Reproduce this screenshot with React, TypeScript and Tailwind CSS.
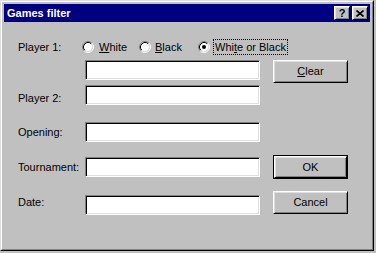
import React from "react";

const raised =
  "border border-t-white border-l-white border-r-black border-b-black shadow-[inset_1px_1px_0_#dfdfdf,inset_-1px_-1px_0_#808080]";
const sunken =
  "border border-t-[#808080] border-l-[#808080] border-r-white border-b-white shadow-[inset_1px_1px_0_#000,inset_-1px_-1px_0_#dfdfdf] bg-white";

const Radio = ({ checked }: { checked?: boolean }) => (
  <svg width="12" height="12" viewBox="0 0 12 12" className="shrink-0">
    <circle cx="6" cy="6" r="4.5" fill="#fff" />
    <path d="M2.11 9.89A5.5 5.5 0 0 1 9.89 2.11" stroke="#808080" fill="none" />
    <path d="M9.89 2.11A5.5 5.5 0 0 1 2.11 9.89" stroke="#fff" fill="none" />
    <path d="M2.82 9.18A4.5 4.5 0 0 1 9.18 2.82" stroke="#000" fill="none" />
    <path d="M9.18 2.82A4.5 4.5 0 0 1 2.82 9.18" stroke="#dfdfdf" fill="none" />
    {checked && <circle cx="6" cy="6" r="2" fill="#000" />}
  </svg>
);

const Field = ({ label, labelClass = "" }: { label?: string; labelClass?: string }) => (
  <div className="flex h-[20px] items-center">
    <div className={"w-[67px] shrink-0 whitespace-nowrap leading-[13px] " + labelClass}>{label}</div>
    <div className={"h-[20px] w-[175px] shrink-0 " + sunken}></div>
  </div>
);

export default function App() {
  return (
    <div className="w-[376px] h-[253px] bg-[#c0c0c0] font-['Liberation_Sans',Arial,sans-serif] text-[11px] text-black">
      <div className="w-[374px] h-[251px] border border-t-[#dfdfdf] border-l-[#dfdfdf] border-r-black border-b-black">
        <div className="h-full flex flex-col p-[2px] border border-t-white border-l-white border-r-[#808080] border-b-[#808080]">
          {/* title bar */}
          <div className="h-[18px] bg-[#000080] flex items-center pl-[3px] pr-[2px]">
            <span className="flex-1 text-white font-bold leading-[13px]">Games filter</span>
            <div className={"w-[16px] h-[14px] bg-[#c0c0c0] flex items-center justify-center font-bold text-[11px] leading-none " + raised}>
              ?
            </div>
            <div className={"ml-[2px] w-[16px] h-[14px] bg-[#c0c0c0] flex items-center justify-center " + raised}>
              <svg width="8" height="7" viewBox="0 0 8 7">
                <path d="M0.5 0.5L7.5 6.5M7.5 0.5L0.5 6.5" stroke="#000" strokeWidth="1.6" fill="none" />
              </svg>
            </div>
          </div>

          {/* body */}
          <div className="flex pl-[14px]">
            <div className="flex flex-col w-[242px] shrink-0">
              <div className="mt-[17px] h-[16px] flex items-center leading-[13px] whitespace-nowrap">
                <div className="w-[64px] shrink-0">Player 1:</div>
                <div className="w-[57px] shrink-0 flex items-center">
                  <Radio />
                  <span className="ml-[5px]">
                    <u>W</u>hite
                  </span>
                </div>
                <div className="w-[59px] shrink-0 flex items-center">
                  <Radio />
                  <span className="ml-[4px]">
                    <u>B</u>lack
                  </span>
                </div>
                <div className="shrink-0 flex items-center">
                  <Radio checked />
                  <span className="ml-[3px] h-[16px] px-[1px] flex items-center border border-dotted border-black">
                    Whi<u>t</u>e or Black
                  </span>
                </div>
              </div>
              <div className="mt-[5px]">
                <Field />
              </div>
              <div className="mt-[5px]">
                <Field label="Player 2:" labelClass="pt-[6px]" />
              </div>
              <div className="mt-[17px]">
                <Field label="Opening:" />
              </div>
              <div className="mt-[15px]">
                <Field label="Tournament:" />
              </div>
              <div className="mt-[18px]">
                <Field label="Date:" labelClass="pb-[6px]" />
              </div>
            </div>

            <div className="ml-[13px] flex flex-col w-[75px] shrink-0">
              <button className={"mt-[38px] h-[23px] bg-[#c0c0c0] " + raised}>
                <u>C</u>lear
              </button>
              <div className="mt-[72px] h-[24px] border border-black">
                <button className={"w-full h-full bg-[#c0c0c0] " + raised}>OK</button>
              </div>
              <button className={"mt-[12px] h-[23px] bg-[#c0c0c0] " + raised}>Cancel</button>
            </div>
          </div>
        </div>
      </div>
    </div>
  );
}
